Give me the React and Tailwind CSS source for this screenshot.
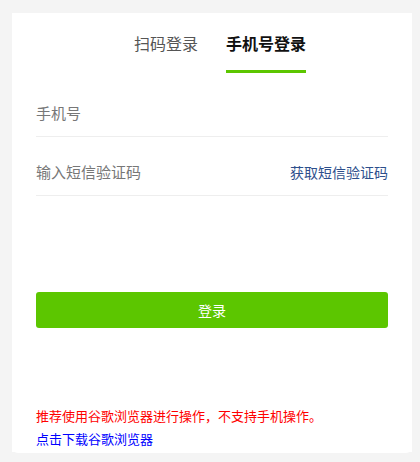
export default function App() {
  const font = { fontFamily: '"Noto Sans CJK SC", "Noto Sans", sans-serif' };
  return (
    <div className="w-[420px] h-[462px] bg-[#f4f4f4] overflow-hidden relative" style={font}>
      <div className="absolute left-[12px] top-[13px] w-[400px] h-[440px] bg-white rounded-[6px]">
        <div className="px-[24px] bg-white pb-[2px]">
          <div className="flex pl-[98px] pt-[18px] gap-[28px]">
            <div className="flex flex-col">
              <div className="text-[16px] leading-[24px] text-[#555]">扫码登录</div>
            </div>
            <div className="flex flex-col">
              <div className="text-[16px] leading-[24px] font-bold text-[#111]">手机号登录</div>
              <div className="mt-[15px] h-[3px] bg-[#5cc600]"></div>
            </div>
          </div>
          <div className="mt-[19px] h-[45px] border-b border-[#eeeeee] flex items-center pb-[2px]">
            <span className="text-[15px] leading-[22px] text-[#777]">手机号</span>
          </div>
          <div className="mt-[14px] h-[45px] border-b border-[#eeeeee] flex items-center justify-between pb-[2px]">
            <span className="text-[15px] leading-[22px] text-[#777]">输入短信验证码</span>
            <span className="text-[14px] leading-[22px] text-[#2d4f8c]">获取短信验证码</span>
          </div>
          <button className="mt-[96px] w-full h-[36px] rounded-[3px] bg-[#5cc600] text-white text-[14px] flex items-center justify-center">
            登录
          </button>
          <div className="mt-[76px] text-[13px] leading-[23px] text-[#ff0000]">推荐使用谷歌浏览器进行操作，不支持手机操作。</div>
          <div className="text-[13px] leading-[23px] text-[#0000ff]">点击下载谷歌浏览器</div>
        </div>
      </div>
    </div>
  );
}
